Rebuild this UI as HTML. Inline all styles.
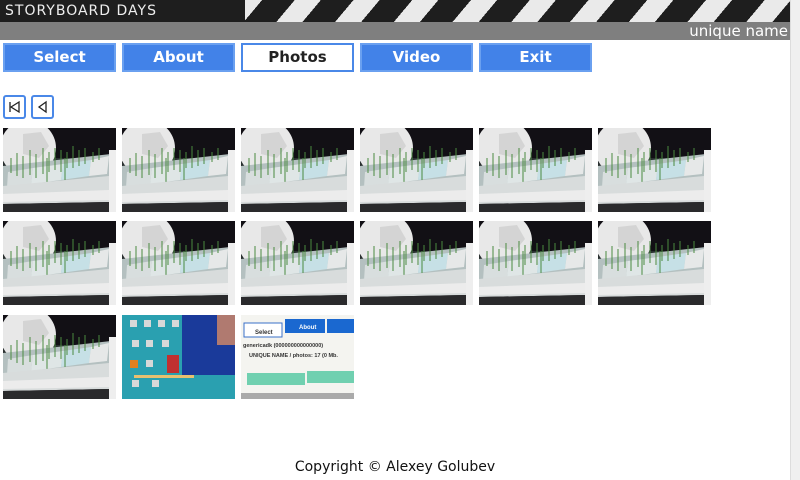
<!DOCTYPE html>
<html><head><meta charset="utf-8"><style>
*{margin:0;padding:0;box-sizing:border-box}
body{width:800px;height:480px;overflow:hidden;background:#fff;font-family:"DejaVu Sans","Liberation Sans",sans-serif;position:relative}
.hdr{position:absolute;left:0;top:0;width:790px;height:22px;background:#1e1e1e;overflow:hidden}
.hdr .t{position:absolute;left:5px;top:3px;color:#eee;font-size:14px;letter-spacing:1px}
.stripes{position:absolute;left:245px;top:0;width:560px;height:22px;background:repeating-linear-gradient(-50deg,#1e1e1e 0 25px,#eaeaea 25px 45px)}
.grey{position:absolute;left:0;top:22px;width:790px;height:18px;background:#7f7f7f;color:#fff;font-size:15px;text-align:right;line-height:18px;padding-right:2px}
.btn{position:absolute;top:43px;width:113px;height:29px;background:#4282e8;border:2px solid #6aa0f0;color:#fff;font-weight:bold;font-size:15px;text-align:center;line-height:25px}
.btn.sel{background:#fff;color:#222;border-color:#4a88e8}
.nav{position:absolute;top:95px;width:23px;height:24px;border:2px solid #4a88e8;border-radius:3px;background:#fff}
.th{position:absolute;width:113px;height:84px}
.sb{position:absolute;right:0;top:0;width:10px;height:480px;background:#f0f0f0;border-left:1px solid #ddd}
.foot{position:absolute;top:459px;left:0;width:790px;text-align:center;font-size:14px;color:#111}
</style></head><body>
<svg width="0" height="0" style="position:absolute"><defs>
<symbol id="g" viewBox="0 0 113 84">
<rect width="113" height="84" fill="#121015"/>
<rect x="0" y="30" width="113" height="20" fill="#2a3030"/>
<circle cx="25" cy="20" r="28" fill="#e8e8e8"/>
<path d="M20 6 L38 4 L46 18 L36 30 L20 26Z" fill="#d4d4d4"/>
<path d="M0 38 L108 26 L106 58 L0 64Z" fill="#b4c0c0"/>
<path d="M5 44 L30 40 L28 56 L4 60Z" fill="#d8dede"/>
<path d="M30 40 L60 36 L58 52 L28 56Z" fill="#dfe6e6"/>
<path d="M60 36 L88 32 L86 48 L58 52Z" fill="#c6e0e6"/>
<path d="M88 32 L106 28 L104 46 L86 48Z" fill="#e6e8e8"/>
<g stroke="#4a8a40" stroke-width="1"><path d="M8 30V45M14 25V48M20 28V50M27 22V47M33 26V50M40 20V46M46 24V44M52 20V42M58 22V44M64 24V40M70 18V40M76 22V38M82 20V36M90 24V34M96 20V32M62 30V52M44 30V54"/></g>
<path d="M0 58 L106 48 L106 74 L0 76Z" fill="#d8dcdc"/>
<path d="M0 66 L106 62 L106 72 L0 74Z" fill="#ececec"/>
<path d="M0 76 L106 74 L106 84 L0 84Z" fill="#2a2a2c"/>
<rect x="106" y="22" width="7" height="62" fill="#eeeeee"/>
</symbol></defs></svg>
<div class="hdr"><div class="stripes"></div><div class="t">STORYBOARD DAYS</div></div>
<div class="grey">unique name</div>
<div class="btn" style="left:3px">Select</div>
<div class="btn" style="left:122px">About</div>
<div class="btn sel" style="left:241px">Photos</div>
<div class="btn" style="left:360px">Video</div>
<div class="btn" style="left:479px">Exit</div>
<div class="nav" style="left:3px"><svg width="19" height="20"><path d="M5 5V15M6 10L14 5V15Z" stroke="#222" fill="none" stroke-width="1.3"/></svg></div>
<div class="nav" style="left:31px"><svg width="19" height="20"><path d="M6 10L13 5V15Z" stroke="#222" fill="none" stroke-width="1.3"/></svg></div>

<svg class="th" style="left:3px;top:128px"><use href="#g"/></svg>
<svg class="th" style="left:122px;top:128px"><use href="#g"/></svg>
<svg class="th" style="left:241px;top:128px"><use href="#g"/></svg>
<svg class="th" style="left:360px;top:128px"><use href="#g"/></svg>
<svg class="th" style="left:479px;top:128px"><use href="#g"/></svg>
<svg class="th" style="left:598px;top:128px"><use href="#g"/></svg>
<svg class="th" style="left:3px;top:221px"><use href="#g"/></svg>
<svg class="th" style="left:122px;top:221px"><use href="#g"/></svg>
<svg class="th" style="left:241px;top:221px"><use href="#g"/></svg>
<svg class="th" style="left:360px;top:221px"><use href="#g"/></svg>
<svg class="th" style="left:479px;top:221px"><use href="#g"/></svg>
<svg class="th" style="left:598px;top:221px"><use href="#g"/></svg>
<svg class="th" style="left:3px;top:315px"><use href="#g"/></svg>
<svg class="th" style="left:122px;top:315px" viewBox="0 0 113 84">
<rect width="113" height="84" fill="#2aa0b0"/><rect x="60" y="0" width="53" height="60" fill="#1a3a9a"/><rect x="95" y="0" width="18" height="30" fill="#b07a70"/>
<g fill="#d8d8d8"><rect x="8" y="5" width="7" height="7"/><rect x="22" y="5" width="7" height="7"/><rect x="36" y="5" width="7" height="7"/><rect x="50" y="5" width="7" height="7"/><rect x="10" y="25" width="7" height="7"/><rect x="24" y="25" width="7" height="7"/><rect x="40" y="25" width="7" height="7"/><rect x="24" y="45" width="7" height="7"/><rect x="10" y="65" width="7" height="7"/><rect x="30" y="65" width="7" height="7"/></g>
<rect x="8" y="45" width="8" height="8" fill="#e08020"/><rect x="45" y="40" width="12" height="18" fill="#c03030"/><rect x="12" y="60" width="60" height="3" fill="#e8c070"/></svg>
<svg class="th" style="left:241px;top:315px" viewBox="0 0 113 84">
<rect width="113" height="84" fill="#f4f4f0"/><rect x="3" y="8" width="38" height="14" fill="#fff" stroke="#3a70c8"/><text x="14" y="19" font-size="6" font-family="Liberation Sans" font-weight="bold" fill="#333">Select</text>
<rect x="44" y="4" width="40" height="14" fill="#1a68d0"/><text x="58" y="14" font-size="6" font-family="Liberation Sans" font-weight="bold" fill="#fff">About</text><rect x="86" y="4" width="27" height="14" fill="#1a68d0"/>
<text x="2" y="32" font-size="5.5" font-family="Liberation Sans" font-weight="bold" fill="#333">genericadk (000000000000000)</text>
<text x="8" y="42" font-size="5.5" font-family="Liberation Sans" font-weight="bold" fill="#333">UNIQUE NAME / photos: 17 (0 Mb.</text>
<rect x="6" y="58" width="58" height="12" fill="#70d0b0"/><rect x="66" y="56" width="47" height="12" fill="#70d0b0"/><rect x="0" y="78" width="113" height="6" fill="#aaa"/></svg>

<div class="foot">Copyright © Alexey Golubev</div>
<div class="sb"></div>
</body></html>
